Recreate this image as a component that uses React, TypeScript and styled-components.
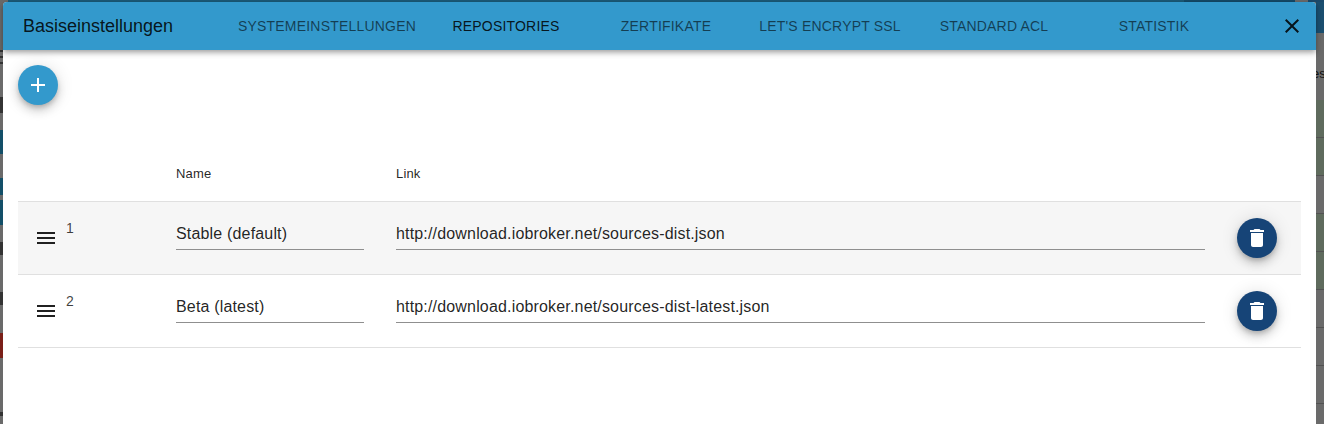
import styled, { createGlobalStyle } from "styled-components";

const repositories = [
  { id: 1, name: "Stable (default)", link: "http://download.iobroker.net/sources-dist.json" },
  { id: 2, name: "Beta (latest)", link: "http://download.iobroker.net/sources-dist-latest.json" },
];

const tabs = [
  { label: "Systemeinstellungen", width: 198 },
  { label: "Repositories", width: 160, active: true },
  { label: "Zertifikate", width: 160 },
  { label: "Let's Encrypt SSL", width: 168 },
  { label: "Standard ACL", width: 160 },
  { label: "Statistik", width: 160 },
];

const GlobalStyle = createGlobalStyle`
  html, body {
    margin: 0;
    padding: 0;
    height: 424px;
    overflow: hidden;
    background: #6a6a6a;
    font-family: "Liberation Sans", Arial, sans-serif;
  }
`;

const Icon = ({ d, color }: { d: string; color: string }) => (
  <svg width="24" height="24" viewBox="0 0 24 24" fill={color}>
    <path d={d} />
  </svg>
);

const ADD = "M19 13h-6v6h-2v-6H5v-2h6V5h2v6h6v2z";
const CLOSE = "M19 6.41L17.59 5 12 10.59 6.41 5 5 6.41 10.59 12 5 17.59 6.41 19 12 13.41 17.59 19 19 17.59 13.41 12z";
const MENU = "M3 18h18v-2H3v2zm0-5h18v-2H3v2zm0-7v2h18V6H3z";
const DELETE = "M6 19c0 1.1.9 2 2 2h8c1.1 0 2-.9 2-2V7H6v12zM19 4h-3.5l-1-1h-5l-1 1H5v2h14V4z";

const App = () => {
  return (
    <Page>
      <GlobalStyle />
      <TopBand />
      <Stage>
        <LeftEdge />
        <Dialog>
          <Header>
            <Title>Basiseinstellungen</Title>
            <TabList>
              {tabs.map((tab) => (
                <Tab key={tab.label} $width={tab.width} $active={tab.active}>
                  {tab.label}
                </Tab>
              ))}
            </TabList>
            <CloseButton>
              <Icon d={CLOSE} color="rgba(0, 0, 0, 0.87)" />
            </CloseButton>
          </Header>
          <Content>
            <RoundButton $color="#3399cc">
              <Icon d={ADD} color="#fff" />
            </RoundButton>
            <Table>
              <HeadRow>
                <span />
                <HeadCell>Name</HeadCell>
                <HeadCell>Link</HeadCell>
                <span />
              </HeadRow>
              {repositories.map((repo) => (
                <Row key={repo.id} $striped={repo.id % 2 === 1}>
                  <Handle>
                    <Icon d={MENU} color="rgba(0, 0, 0, 0.87)" />
                    <RowNumber>{repo.id}</RowNumber>
                  </Handle>
                  <Field>{repo.name}</Field>
                  <Field>{repo.link}</Field>
                  <RoundButton $color="#164477">
                    <Icon d={DELETE} color="#fff" />
                  </RoundButton>
                </Row>
              ))}
            </Table>
          </Content>
        </Dialog>
        <RightEdge>
          <RightTop />
          <RightText>es</RightText>
          <RightStripes />
        </RightEdge>
      </Stage>
    </Page>
  );
};

export default App;

const Page = styled.div`
  display: flex;
  flex-direction: column;
  width: 1324px;
  height: 424px;
  overflow: hidden;
`;

const TopBand = styled.div`
  flex: none;
  height: 2px;
  background: linear-gradient(
    to right,
    #6a6a6a 0 8px,
    #1b5a78 8px 1184px,
    #144a68 1184px 1295px,
    #6a6a6a 1295px 1308px,
    #1b4a6c 1308px
  );
`;

const Stage = styled.div`
  flex: 1;
  display: flex;
  min-height: 0;
`;

const LeftEdge = styled.div`
  flex: none;
  width: 3px;
  background: linear-gradient(
    to bottom,
    #6a6a6a 0 48px,
    #333 48px 50px,
    #6a6a6a 50px 54px,
    #333 54px 56px,
    #6a6a6a 56px 60px,
    #333 60px 62px,
    #6a6a6a 62px 95px,
    #333 95px 111px,
    #6a6a6a 111px 128px,
    #134f68 128px 152px,
    #6a6a6a 152px 176px,
    #134f68 176px 193px,
    #6a6a6a 193px 198px,
    #134f68 198px 223px,
    #6a6a6a 223px 240px,
    #333 240px 253px,
    #6a6a6a 253px 290px,
    #333 290px 303px,
    #6a6a6a 303px 331px,
    #7a1f18 331px 356px,
    #6a6a6a 356px 410px,
    #333 410px 414px,
    #6a6a6a 414px
  );
`;

const RightEdge = styled.div`
  flex: none;
  width: 8px;
  display: flex;
  flex-direction: column;
  overflow: hidden;
`;

const RightTop = styled.div`
  flex: none;
  height: 31px;
  background: #1b4f70;
`;

const RightText = styled.div`
  flex: none;
  height: 67px;
  margin-left: -4px;
  padding-top: 33px;
  box-sizing: border-box;
  font-size: 13px;
  line-height: 16px;
  color: #111;
  white-space: nowrap;
`;

const RightStripes = styled.div`
  flex: 1;
  background: linear-gradient(
    to bottom,
    #5f6b5d 0 37px,
    #525252 37px 38px,
    #5f6b5d 38px 75px,
    #525252 75px 76px,
    #6a6a6a 76px 113px,
    #525252 113px 114px,
    #5f6b5d 114px 151px,
    #525252 151px 152px,
    #5f6b5d 152px 189px,
    #525252 189px 190px,
    #6a6a6a 190px 227px,
    #525252 227px 228px,
    #6a6a6a 228px 265px,
    #525252 265px 266px,
    #6a6a6a 266px 303px,
    #525252 303px 304px,
    #6a6a6a 304px
  );
`;

const Dialog = styled.div`
  flex: none;
  width: 1313px;
  height: 600px;
  display: flex;
  flex-direction: column;
  background: #fff;
  border-radius: 4px;
`;

const Header = styled.header`
  flex: none;
  position: relative;
  z-index: 1;
  height: 48px;
  display: flex;
  align-items: center;
  padding-left: 20px;
  background: #3399cc;
  border-radius: 4px 4px 0 0;
  box-shadow: 0 2px 4px -1px rgba(0, 0, 0, 0.2), 0 4px 5px 0 rgba(0, 0, 0, 0.14),
    0 1px 10px 0 rgba(0, 0, 0, 0.12);
`;

const Title = styled.h1`
  flex: none;
  width: 205px;
  margin: 0;
  font-size: 18px;
  font-weight: 400;
  color: rgba(0, 0, 0, 0.87);
`;

const TabList = styled.nav`
  flex: none;
  display: flex;
  height: 48px;
`;

const Tab = styled.div<{ $width: number; $active?: boolean }>`
  width: ${(p) => p.$width}px;
  display: flex;
  align-items: center;
  justify-content: center;
  font-size: 14px;
  letter-spacing: 0.2px;
  text-transform: uppercase;
  white-space: nowrap;
  color: ${(p) => (p.$active ? "rgba(0, 0, 0, 0.87)" : "rgba(0, 0, 0, 0.6)")};
`;

const CloseButton = styled.div`
  margin-left: 46px;
  display: flex;
`;

const Content = styled.main`
  flex: 1;
  padding: 15px 15px 0;
`;

const RoundButton = styled.div<{ $color: string }>`
  width: 40px;
  height: 40px;
  border-radius: 50%;
  display: flex;
  align-items: center;
  justify-content: center;
  background: ${(p) => p.$color};
  box-shadow: 0 3px 5px -1px rgba(0, 0, 0, 0.2), 0 6px 10px 0 rgba(0, 0, 0, 0.14),
    0 1px 18px 0 rgba(0, 0, 0, 0.12);
`;

const Table = styled.section`
  margin-top: 54px;
  width: 1283px;
  border-bottom: 1px solid #e0e0e0;
`;

const HeadRow = styled.div`
  display: grid;
  grid-template-columns: 158px 220px 1fr;
  height: 41px;
  margin-bottom: 1px;
  align-items: center;
`;

const HeadCell = styled.div`
  font-size: 13px;
  letter-spacing: 0.15px;
  color: rgba(0, 0, 0, 0.87);
`;

const Row = styled.div<{ $striped: boolean }>`
  display: grid;
  grid-template-columns: 126px 188px 809px 40px;
  column-gap: 32px;
  box-sizing: border-box;
  height: 73px;
  border-top: 1px solid #e0e0e0;
  background: ${(p) => (p.$striped ? "#f6f6f6" : "#fff")};
  align-items: center;
`;

const Handle = styled.div`
  display: flex;
  align-items: center;
  padding-left: 16px;
`;

const RowNumber = styled.span`
  align-self: flex-start;
  margin: -6px 0 0 8px;
  font-size: 14px;
  line-height: 16px;
  color: rgba(0, 0, 0, 0.75);
`;

const Field = styled.div`
  box-sizing: border-box;
  height: 33px;
  margin-top: -9px;
  padding-top: 3px;
  line-height: 28px;
  font-size: 16px;
  letter-spacing: 0.17px;
  white-space: nowrap;
  color: rgba(0, 0, 0, 0.87);
  border-bottom: 1px solid #8f8f8f;
`;
